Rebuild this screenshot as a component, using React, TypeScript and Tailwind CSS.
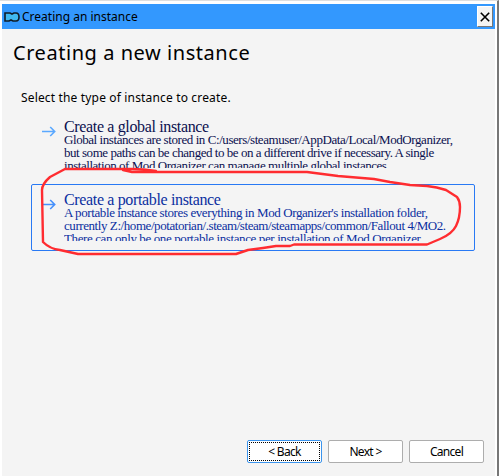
import type { ReactNode } from "react";

const sans = "font-['Noto_Sans','DejaVu_Sans',sans-serif]";
const serif = "font-['Liberation_Serif',serif]";

function Arrow({ selected }: { selected?: boolean }) {
  return (
    <svg width="14" height="11" viewBox="0 0 14 11" fill="none" stroke={selected ? "#4590fb" : "#5aa8ff"} strokeWidth="1.6" className="mt-[14px] block shrink-0">
      <path d="M0 5.5H12.5M8.2 1L12.7 5.5L8.2 10" />
    </svg>
  );
}

type OptionProps = { title: ReactNode; lines: ReactNode; selected?: boolean };

function Option({ title, lines, selected }: OptionProps) {
  return (
    <div className={`flex h-[67px] w-[444px] rounded-[2px] border pl-[10px] ${selected ? "border-[#2879f4] text-[#0b2fa0]" : "border-transparent text-[#0b104f]"}`}>
      <Arrow selected={selected} />
      <div className={`ml-[8px] pt-[6px] whitespace-nowrap ${serif}`}>
        <div className="h-[17px] text-[16px] leading-[18px] tracking-[-0.35px]">{title}</div>
        <div className="h-[33px] overflow-hidden">
          <div className="-mt-[2px] text-[13px] leading-[13px]">{lines}</div>
        </div>
      </div>
    </div>
  );
}

export default function App() {
  return (
    <div className={`relative flex h-[476px] w-[499px] flex-col overflow-hidden border-t border-r-2 border-t-[#dfdfdf] border-r-[#777777] bg-white pt-[3px] pr-[2px] pl-[2px] text-black ${sans}`}>
      <header className="flex h-[25px] shrink-0 items-center bg-[#3398fe] pl-[2px]">
        <svg width="16" height="10" viewBox="0 0 16 10" className="block">
          <path d="M1 1H6L8 2L10 1H12Q15 1 15 5Q15 9 12 9H9L7 8L5 9H1Z" fill="#40b9f1" stroke="#101c28" strokeWidth="1.6" />
        </svg>
        <span className="ml-[2px] text-[12px] leading-[15px] whitespace-nowrap">Creating an instance</span>
        <button className="mr-[2px] ml-auto flex h-[21px] w-[16px] items-center justify-center border border-t-white border-r-[#777] border-b-[#777] border-l-white bg-[#f4f4f4]">
          <svg width="10" height="10" viewBox="0 0 10 10" stroke="#000" strokeWidth="1.6">
            <path d="M.8 .8L9.2 9.2M9.2 .8L.8 9.2" />
          </svg>
        </button>
      </header>
      <main className="flex min-h-0 flex-1 flex-col bg-[#f4f4f4]">
        <h1 className="mt-[11px] ml-[11px] h-[26px] text-[20px] leading-[25px] tracking-[0.55px] whitespace-nowrap">Creating a new instance</h1>
        <p className="mt-[24px] ml-[19px] h-[16px] text-[12px] leading-[16px] tracking-[0.16px] whitespace-nowrap">Select the type of instance to create.</p>
        <div className="mt-[5px] ml-[29px] flex flex-col gap-[6px]">
          <Option
            title={<span>Create a global instance</span>}
            lines={
              <>
                <div className="tracking-[-0.43px]">Global instances are stored in C:/users/steamuser/AppData/Local/ModOrganizer,</div>
                <div className="tracking-[-0.46px]">but some paths can be changed to be on a different drive if necessary. A single</div>
                <div className="tracking-[-0.46px]">installation of Mod Organizer can manage multiple global instances.</div>
              </>
            }
          />
          <Option
            selected
            title={<span>Create a portable instance</span>}
            lines={
              <>
                <div className="tracking-[-0.4px]">A portable instance stores everything in Mod Organizer's installation folder,</div>
                <div className="tracking-[-0.43px]">currently Z:/home/potatorian/.steam/steam/steamapps/common/Fallout 4/MO2.</div>
                <div className="tracking-[-0.39px]">There can only be one portable instance per installation of Mod Organizer.</div>
              </>
            }
          />
        </div>
        <footer className="mt-auto mr-[11px] mb-[13px] flex justify-end gap-[6px] text-[12px] tracking-[-0.7px] [word-spacing:2px]">
          <button className="h-[23px] w-[75px] rounded-[2px] border border-[#3b94ed] bg-white p-px">
            <span className="flex h-full items-center justify-center border border-dotted border-black whitespace-pre">{"< Back"}</span>
          </button>
          <button className="h-[23px] w-[75px] rounded-[2px] border border-[#adadad] bg-white">{"Next >"}</button>
          <button className="h-[23px] w-[75px] rounded-[2px] border border-[#adadad] bg-white">Cancel</button>
        </footer>
      </main>
      <svg width="499" height="476" viewBox="0 0 499 476" fill="none" className="pointer-events-none absolute -top-px left-0">
        <path d="M156 171Q144 169 132 169H65L50 177Q42 184 42 190L43 242Q50 249 60 250L78 254H236L248 250L263 248L276 246H290L294 244.5H427L440 239Q452 234 456 226Q460 218 460 207Q460 201 457 197L446 190Q437 187 427 186L410 185L390 182L374 179L338 176L307 172H132L123 170" stroke="#ff2c30" strokeWidth="2.4" strokeLinejoin="round" strokeLinecap="round" />
      </svg>
    </div>
  );
}
